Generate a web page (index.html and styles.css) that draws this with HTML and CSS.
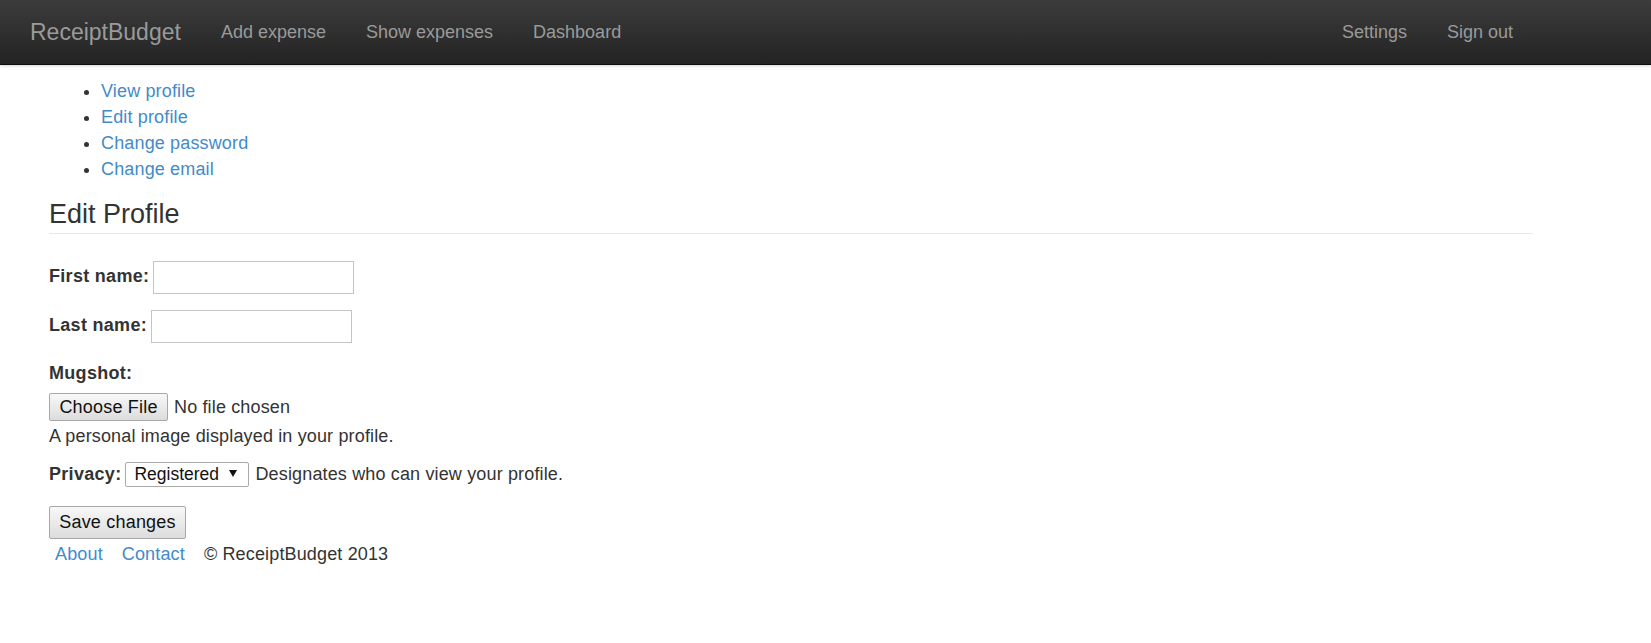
FILE: index.html
```html
<!DOCTYPE html>
<html lang="en">
<head>
<meta charset="utf-8">
<title>ReceiptBudget - Edit Profile</title>
<link rel="stylesheet" href="styles.css">
</head>
<body>
<header class="navbar">
  <div class="container nav-inner">
    <a class="brand" href="#">ReceiptBudget</a>
    <ul class="nav">
      <li><a href="#">Add expense</a></li>
      <li><a href="#">Show expenses</a></li>
      <li><a href="#">Dashboard</a></li>
    </ul>
    <ul class="nav nav-right">
      <li><a href="#">Settings</a></li>
      <li><a href="#">Sign out</a></li>
    </ul>
  </div>
</header>
<main class="container content">
  <ul class="sub-nav">
    <li><a href="#">View profile</a></li>
    <li><a href="#">Edit profile</a></li>
    <li><a href="#">Change password</a></li>
    <li><a href="#">Change email</a></li>
  </ul>
  <h2 class="page-title">Edit Profile</h2>
  <form class="profile-form">
    <div class="field-inline first">
      <label for="fn">First name:</label>
      <input id="fn" type="text" class="text-input">
    </div>
    <div class="field-inline second">
      <label for="ln">Last name:</label>
      <input id="ln" type="text" class="text-input">
    </div>
    <div class="field-label">Mugshot:</div>
    <div class="file-row">
      <label class="btn file-btn">Choose File<input type="file" class="file-hidden"></label>
      <span class="file-name">No file chosen</span>
    </div>
    <div class="help">A personal image displayed in your profile.</div>
    <div class="field-inline privacy">
      <label for="pv">Privacy:</label>
      <span class="select-wrap">
        <select id="pv" class="select">
          <option>Registered</option>
          <option>Open</option>
          <option>Closed</option>
        </select>
        <svg class="select-arrow" width="8" height="7" viewBox="0 0 8 7"><path d="M0 0H8L4 7Z" fill="#111"/></svg>
      </span>
      <span class="help-inline">Designates who can view your profile.</span>
    </div>
    <button type="submit" class="btn save-btn">Save changes</button>
  </form>
  <footer class="footer">
    <a href="#">About</a>
    <a href="#">Contact</a>
    <span>© ReceiptBudget 2013</span>
  </footer>
</main>
</body>
</html>
```
FILE: styles.css
```css
* { box-sizing: border-box; }
html, body { margin: 0; padding: 0; background: #fff; }
body {
  font-family: "Liberation Sans", Arial, sans-serif;
  font-size: 18px;
  line-height: 26px;
  color: #333;
}
a { color: #428bca; text-decoration: none; }

.container { width: 1484px; margin-left: 49px; }
.content { letter-spacing: 0.15px; }

.navbar {
  height: 65px;
  background: linear-gradient(to bottom, #3c3c3c, #232323);
  border-bottom: 1px solid #0e0e0e;
  box-shadow: 0 1px 3px rgba(0,0,0,0.18);
}
.nav-inner { display: flex; align-items: center; height: 64px; }
.brand {
  margin-left: -19px;
  padding-right: 20px;
  font-size: 23px;
  line-height: 30px;
  color: #9a9a9a;
}
.nav { display: flex; list-style: none; margin: 0; padding: 0; }
.nav a { display: block; padding: 0 20px; color: #9a9a9a; font-size: 18px; line-height: 26px; }
.nav-right { margin-left: auto; }

.sub-nav { margin: 13px 0 0; padding-left: 52px; }
.sub-nav li { line-height: 26px; }
.sub-nav li::marker { color: #333; }

.page-title {
  margin: 17px 0 0;
  padding-bottom: 4px;
  font-size: 27px;
  line-height: 30px;
  font-weight: normal;
  letter-spacing: 0;
  color: #333;
  border-bottom: 1px solid #e8e8e8;
}

.profile-form { margin: 0; }
.field-inline { display: flex; align-items: center; gap: 4px; }
.field-inline label, .field-label {
  font-weight: bold;
  letter-spacing: 0.3px;
  color: #333;
}
.field-inline label { padding-bottom: 3px; }
.first { margin-top: 27px; height: 33px; }
.second { margin-top: 16px; height: 33px; }
.text-input {
  width: 201px;
  height: 33px;
  border: 1px solid #c4c4c4;
  border-radius: 0;
  background: #fff;
  font: inherit;
  padding: 2px 6px;
}
.field-label { margin-top: 17px; line-height: 26px; }

.file-row { display: flex; align-items: center; gap: 6px; margin-top: 7px; }
.btn {
  display: inline-flex;
  align-items: center;
  justify-content: center;
  font-family: "Liberation Sans", Arial, sans-serif;
  font-size: 18px;
  letter-spacing: 0.2px;
  color: #111;
  background: linear-gradient(to bottom, #f8f8f8, #dcdcdc);
  border: 1px solid #a8a8a8;
  border-radius: 2px;
  padding: 0 9px;
  cursor: pointer;
}
.file-btn { width: 119px; height: 28px; }
.file-hidden { display: none; }
.file-name { color: #333; }

.help { margin-top: 2px; line-height: 26px; }

.privacy { margin-top: 12px; height: 25px; }
.privacy label { padding-bottom: 0; }
.select-wrap { position: relative; display: inline-block; height: 25px; }
.select {
  appearance: none;
  -webkit-appearance: none;
  width: 124px;
  height: 25px;
  border: 1px solid #aaa;
  border-radius: 2px;
  background: #fff;
  font-family: "Liberation Sans", Arial, sans-serif;
  font-size: 17.5px;
  color: #111;
  padding: 0 0 0 8px;
}
.select-arrow { position: absolute; right: 12px; top: 9px; pointer-events: none; }
.help-inline { margin-left: 2px; }

.save-btn { margin-top: 20px; width: 137px; height: 33px; }

.footer { display: flex; gap: 19px; margin-top: 2px; padding-left: 6px; line-height: 26px; }
```
